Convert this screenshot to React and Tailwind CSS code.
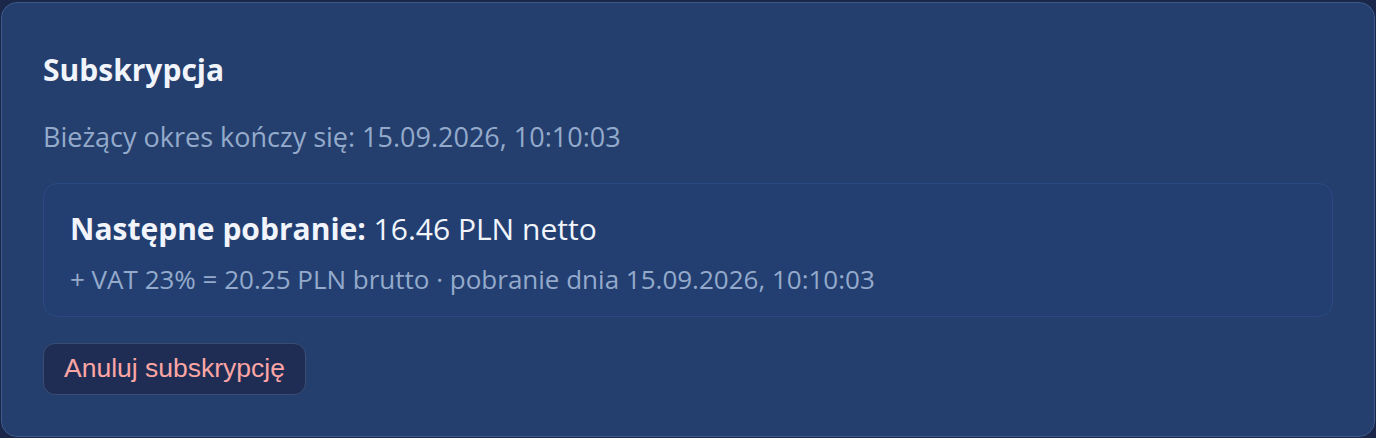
export default function App() {
  return (
    <div className="min-h-[438px] bg-[#1b2748] pt-[2px] px-[1px]">
      <div
        className="rounded-[16px] border border-[#3d5a8a] bg-[#243f6e] px-[41px] pt-[47px] pb-[41px]"
        style={{ fontFamily: '"Open Sans", "Noto Sans", sans-serif' }}
      >
        <h2 className="text-[30px] font-bold leading-[40px] text-[#f1f5fb]">Subskrypcja</h2>
        <p className="mt-[29px] text-[27px] leading-[36px] text-[#94aacb]">
          Bieżący okres kończy się: 15.09.2026, 10:10:03
        </p>

        {/* next charge */}
        <div className="mt-[28px] rounded-[14px] border border-[#2a4a80] bg-[#233f72] px-[26px] pt-[25px] pb-[20px]">
          <p className="text-[30px] leading-[40px] text-[#f1f5fb]">
            <span className="font-bold">Następne pobranie:</span> 16.46 PLN netto
          </p>
          <p className="mt-[13px] text-[26px] leading-[34px] text-[#94aacb]">
            + VAT 23% = 20.25 PLN brutto · pobranie dnia 15.09.2026, 10:10:03
          </p>
        </div>

        <button
          className="mt-[26px] h-[52px] rounded-[12px] border border-[#3a4d75] bg-[#1f2d54] px-[20px] text-[26.5px] text-[#fca5a5]"
          style={{ fontFamily: '"Liberation Sans", Arial, sans-serif' }}
        >
          Anuluj subskrypcję
        </button>
      </div>
    </div>
  );
}
